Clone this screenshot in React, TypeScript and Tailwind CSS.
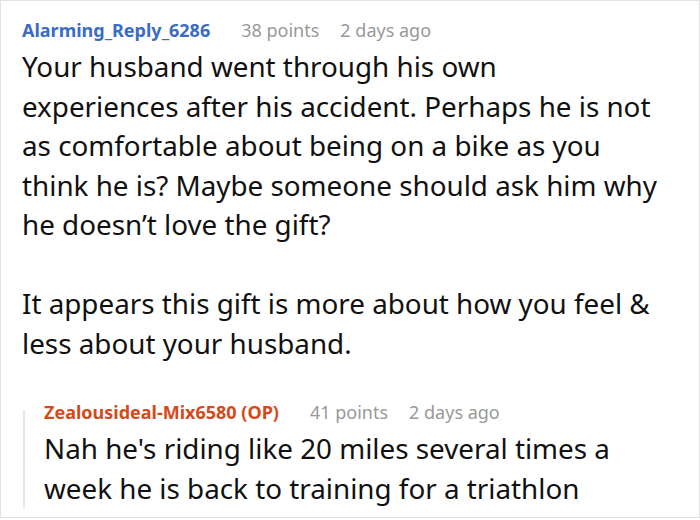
const font = { fontFamily: '"Noto Sans", "Open Sans", sans-serif' };

function Meta({ name, nameColor, points }: { name: string; nameColor: string; points: string }) {
  return (
    <div className="flex items-center text-[18px] leading-[26px]">
      <span className={`font-bold ${nameColor}`}>{name}</span>
      <span className="text-[#999999] ml-[31px]">{points}</span>
      <span className="text-[#999999] ml-[21px]">2 days ago</span>
    </div>
  );
}

export default function App() {
  return (
    <div className="w-[700px] h-[518px] bg-white border border-[#e2e2e2] overflow-hidden" style={font}>
      <div className="pl-[21px] pr-[42px] pt-[16px]">
        <Meta name="Alarming_Reply_6286" nameColor="text-[#3a6dc2]" points="38 points" />
        <div className="text-[27.8px] leading-[39.5px] text-[#111111] mt-[4px]">
          <p>
            Your husband went through his own experiences after his accident. Perhaps he is not as
            comfortable about being on a bike as you think he is? Maybe someone should ask him why he
            doesn’t love the gift?
          </p>
          <p className="mt-[39.5px]">
            It appears this gift is more about how you feel &amp; less about your husband.
          </p>
        </div>
      </div>
      <div className="flex ml-[22px] mr-[42px] mt-[36px]">
        <div className="w-[2px] shrink-0 bg-[#e8e8e8] mt-[11px]" />
        <div className="pl-[19px] flex-1">
          <Meta name="Zealousideal-Mix6580 (OP)" nameColor="text-[#d5491a]" points="41 points" />
          <p className="text-[27.8px] leading-[39.5px] text-[#111111] mt-[4px]">
            Nah he's riding like 20 miles several times a week he is back to training for a triathlon
          </p>
        </div>
      </div>
    </div>
  );
}
